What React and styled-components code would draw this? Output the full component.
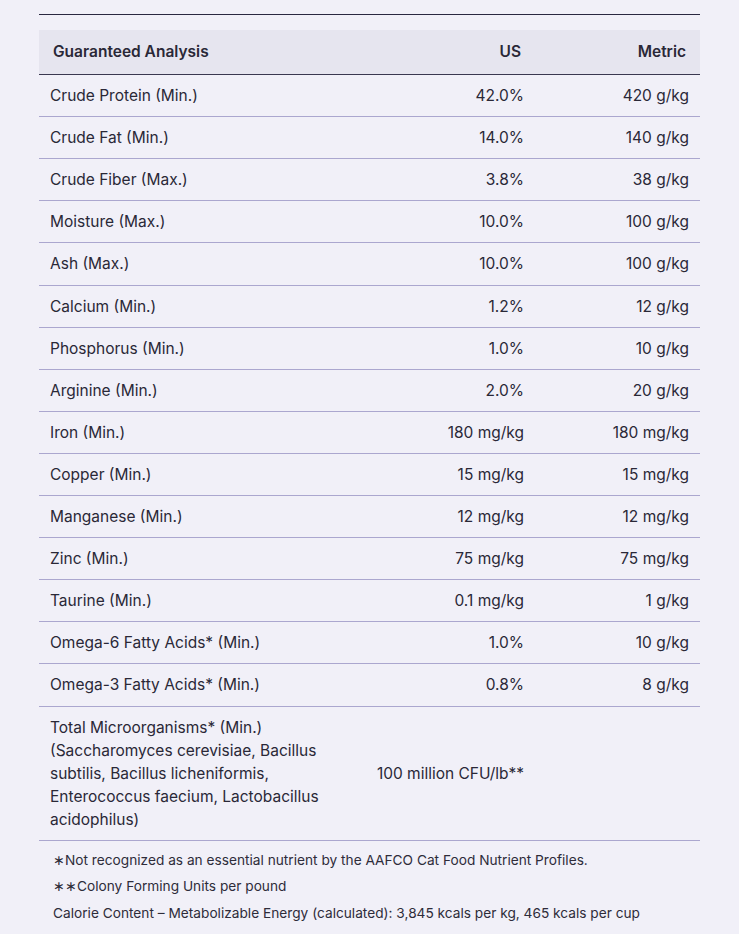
import React from 'react'
import styled, { createGlobalStyle } from 'styled-components'

const GlobalStyle = createGlobalStyle`
    html, body {
        margin: 0;
        background: #f1f0f8;
    }
    body {
        font-family: Inter, "Liberation Sans", sans-serif;
        color: #2a2837;
    }
`

const Wrapper = styled.section`
    margin: 0 39px 0 39px;
    padding-top: 14px;
`

const TopRule = styled.div`
    border-top: 1px solid #2a2840;
    margin-bottom: 15px;
`

const Table = styled.table`
    width: 100%;
    border-collapse: collapse;
    table-layout: fixed;
    font-size: 15.5px;
    line-height: 23.1px;
`

const HeadCell = styled.th`
    background: #e6e5ef;
    font-weight: 600;
    text-align: ${props => props.$align || 'left'};
    padding: 10px 14px 11px 14px;
    border-bottom: 1px solid #3a3850;
    width: ${props => props.$width || 'auto'};
`

const Row = styled.tr`
    border-bottom: 1px solid #aba7cf;
`

const Cell = styled.td`
    padding: 9px 11px;
    text-align: ${props => props.$align || 'left'};
    vertical-align: middle;
`

const Footer = styled.div`
    padding: 6px 14px 0 14px;
    font-size: 13.7px;
    line-height: 26.5px;
    color: #2e2c3a;
`

const Note = styled.p`
    margin: 0;
`

const rows = [
    ['Crude Protein (Min.)', '42.0%', '420 g/kg'],
    ['Crude Fat (Min.)', '14.0%', '140 g/kg'],
    ['Crude Fiber (Max.)', '3.8%', '38 g/kg'],
    ['Moisture (Max.)', '10.0%', '100 g/kg'],
    ['Ash (Max.)', '10.0%', '100 g/kg'],
    ['Calcium (Min.)', '1.2%', '12 g/kg'],
    ['Phosphorus (Min.)', '1.0%', '10 g/kg'],
    ['Arginine (Min.)', '2.0%', '20 g/kg'],
    ['Iron (Min.)', '180 mg/kg', '180 mg/kg'],
    ['Copper (Min.)', '15 mg/kg', '15 mg/kg'],
    ['Manganese (Min.)', '12 mg/kg', '12 mg/kg'],
    ['Zinc (Min.)', '75 mg/kg', '75 mg/kg'],
    ['Taurine (Min.)', '0.1 mg/kg', '1 g/kg'],
    ['Omega-6 Fatty Acids* (Min.)', '1.0%', '10 g/kg'],
    ['Omega-3 Fatty Acids* (Min.)', '0.8%', '8 g/kg'],
]

export default function App() {
    return (
        <>
            <GlobalStyle />
            <Wrapper>
                <TopRule />
                <Table>
                    <thead>
                        <tr>
                            <HeadCell $width="272px">Guaranteed Analysis</HeadCell>
                            <HeadCell $align="right">US</HeadCell>
                            <HeadCell $align="right" $width="137px">Metric</HeadCell>
                        </tr>
                    </thead>
                    <tbody>
                        {rows.map((row, index) => (
                            <Row key={index}>
                                <Cell>{row[0]}</Cell>
                                <Cell $align="right">{row[1]}</Cell>
                                <Cell $align="right">{row[2]}</Cell>
                            </Row>
                        ))}
                        <Row>
                            <Cell>
                                Total Microorganisms* (Min.)<br />
                                (Saccharomyces cerevisiae, Bacillus subtilis, Bacillus licheniformis, Enterococcus faecium, Lactobacillus acidophilus)
                            </Cell>
                            <Cell $align="right">100 million CFU/lb**</Cell>
                            <Cell $align="right"></Cell>
                        </Row>
                    </tbody>
                </Table>
                <Footer>
                    <Note>∗Not recognized as an essential nutrient by the AAFCO Cat Food Nutrient Profiles.</Note>
                    <Note>∗∗Colony Forming Units per pound</Note>
                    <Note>Calorie Content – Metabolizable Energy (calculated): 3,845 kcals per kg, 465 kcals per cup</Note>
                </Footer>
            </Wrapper>
        </>
    )
}
